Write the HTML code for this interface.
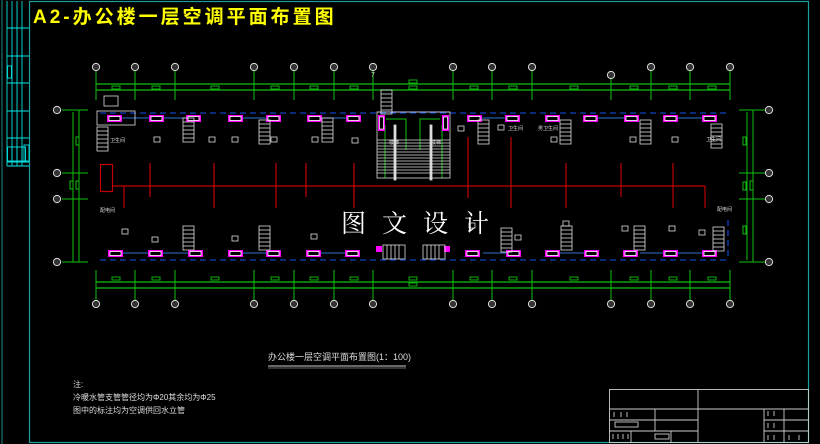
<!DOCTYPE html>
<html><head><meta charset="utf-8"><style>
html,body{margin:0;padding:0;background:#000;}
svg{display:block}
text{font-family:"Liberation Sans","Noto Sans CJK SC",sans-serif}
</style></head><body>
<svg width="820" height="444" viewBox="0 0 820 444" xmlns="http://www.w3.org/2000/svg">
<defs>
<g id="u"><rect x="0" y="0" width="15" height="7" fill="#ff00ff"/><rect x="2" y="1.5" width="11" height="4" fill="#000" stroke="#fff" stroke-width="0.8"/></g>
<g id="st" stroke="#ddd" stroke-width="0.8" fill="none"><rect x="0" y="0" width="11" height="24"/><line x1="0" y1="4" x2="11" y2="4"/><line x1="0" y1="8" x2="11" y2="8"/><line x1="0" y1="12" x2="11" y2="12"/><line x1="0" y1="16" x2="11" y2="16"/><line x1="0" y1="20" x2="11" y2="20"/></g>
<g id="ax"><circle r="3.6" fill="#333" stroke="#ddd" stroke-width="1"/></g>
</defs>
<rect width="820" height="444" fill="#000"/>
<line x1="2" y1="0" x2="2" y2="444" stroke="#1a8a8a" stroke-width="1"/>
<rect x="29.5" y="1.5" width="779" height="441" fill="none" stroke="#1aa0a0" stroke-width="1.2"/>
<g stroke="#00e5e5" stroke-width="0.9" fill="none">
<line x1="7" y1="1" x2="7" y2="166"/><line x1="12" y1="1" x2="12" y2="166"/><line x1="17" y1="1" x2="17" y2="166"/><line x1="22" y1="1" x2="22" y2="166"/>
<line x1="7" y1="28" x2="29" y2="28"/><line x1="7" y1="56" x2="29" y2="56"/><line x1="7" y1="83" x2="29" y2="83"/><line x1="7" y1="111" x2="29" y2="111"/><line x1="7" y1="138" x2="29" y2="138"/><line x1="7" y1="162" x2="29" y2="162"/><line x1="7" y1="166" x2="29" y2="166"/>
<rect x="7.5" y="66" width="4" height="12"/><rect x="7.5" y="147" width="18" height="14"/><line x1="12" y1="147" x2="12" y2="161"/><line x1="17" y1="147" x2="17" y2="161"/><line x1="22" y1="147" x2="22" y2="161"/><rect x="24" y="145" width="5" height="16"/>
</g>
<text x="33" y="23" font-size="19" font-weight="bold" fill="#ffff00" letter-spacing="3">A2-办公楼一层空调平面布置图</text>

<g stroke="#10c010" stroke-width="1.2" fill="none">
<line x1="96" y1="84" x2="730" y2="84"/><line x1="96" y1="90" x2="730" y2="90"/>
<line x1="96" y1="282" x2="730" y2="282"/><line x1="96" y1="288" x2="730" y2="288"/>
<g stroke-width="1">
<line x1="96" y1="71" x2="96" y2="100"/><line x1="135" y1="71" x2="135" y2="100"/><line x1="175" y1="71" x2="175" y2="100"/><line x1="254" y1="71" x2="254" y2="100"/><line x1="294" y1="71" x2="294" y2="100"/><line x1="334" y1="71" x2="334" y2="100"/><line x1="373" y1="71" x2="373" y2="100"/><line x1="453" y1="71" x2="453" y2="100"/><line x1="492" y1="71" x2="492" y2="100"/><line x1="532" y1="71" x2="532" y2="100"/><line x1="611" y1="75" x2="611" y2="100"/><line x1="651" y1="71" x2="651" y2="100"/><line x1="690" y1="71" x2="690" y2="100"/><line x1="730" y1="71" x2="730" y2="100"/>
<line x1="96" y1="270" x2="96" y2="300"/><line x1="135" y1="270" x2="135" y2="300"/><line x1="175" y1="270" x2="175" y2="300"/><line x1="254" y1="270" x2="254" y2="300"/><line x1="294" y1="270" x2="294" y2="300"/><line x1="334" y1="270" x2="334" y2="300"/><line x1="373" y1="270" x2="373" y2="300"/><line x1="453" y1="270" x2="453" y2="300"/><line x1="492" y1="270" x2="492" y2="300"/><line x1="532" y1="270" x2="532" y2="300"/><line x1="611" y1="270" x2="611" y2="300"/><line x1="651" y1="270" x2="651" y2="300"/><line x1="690" y1="270" x2="690" y2="300"/><line x1="730" y1="270" x2="730" y2="300"/>
<line x1="62" y1="110" x2="88" y2="110"/><line x1="62" y1="173" x2="88" y2="173"/><line x1="62" y1="199" x2="88" y2="199"/><line x1="62" y1="262" x2="88" y2="262"/>
<line x1="73" y1="112" x2="73" y2="262"/><line x1="79" y1="110" x2="79" y2="262"/>
<line x1="739" y1="110" x2="765" y2="110"/><line x1="739" y1="173" x2="765" y2="173"/><line x1="739" y1="199" x2="765" y2="199"/><line x1="739" y1="262" x2="765" y2="262"/>
<line x1="747" y1="112" x2="747" y2="260"/><line x1="753" y1="110" x2="753" y2="262"/>
<rect x="76" y="137" width="3" height="8"/><rect x="70" y="181" width="3" height="8"/><rect x="76" y="181" width="3" height="8"/>
<rect x="743" y="137" width="3" height="8"/><rect x="743" y="182" width="3" height="8"/><rect x="750" y="181" width="3" height="9"/><rect x="743" y="226" width="3" height="8"/>
</g>
<g stroke-width="0.9">
<rect x="112" y="86" width="8" height="3"/><rect x="152" y="86" width="8" height="3"/><rect x="211" y="86" width="8" height="3"/><rect x="271" y="86" width="8" height="3"/><rect x="310" y="86" width="8" height="3"/><rect x="350" y="86" width="8" height="3"/><rect x="409" y="80" width="8" height="3"/><rect x="409" y="86" width="8" height="3"/><rect x="470" y="86" width="8" height="3"/><rect x="509" y="86" width="8" height="3"/><rect x="570" y="86" width="8" height="3"/><rect x="630" y="86" width="8" height="3"/><rect x="669" y="86" width="8" height="3"/><rect x="708" y="86" width="8" height="3"/>
<rect x="112" y="277" width="8" height="3"/><rect x="152" y="277" width="8" height="3"/><rect x="211" y="277" width="8" height="3"/><rect x="271" y="277" width="8" height="3"/><rect x="310" y="277" width="8" height="3"/><rect x="350" y="277" width="8" height="3"/><rect x="409" y="277" width="8" height="3"/><rect x="409" y="283" width="8" height="3"/><rect x="470" y="277" width="8" height="3"/><rect x="509" y="277" width="8" height="3"/><rect x="570" y="277" width="8" height="3"/><rect x="630" y="277" width="8" height="3"/><rect x="669" y="277" width="8" height="3"/><rect x="708" y="277" width="8" height="3"/>
</g>
<path d="M386 119 H406 V150 M440 119 H420 V150 M385 125 V178 M442 125 V178" stroke-width="1"/>
</g>
<g>
<use href="#ax" x="96" y="67"/><use href="#ax" x="135" y="67"/><use href="#ax" x="175" y="67"/><use href="#ax" x="254" y="67"/><use href="#ax" x="294" y="67"/><use href="#ax" x="334" y="67"/><use href="#ax" x="373" y="67"/><use href="#ax" x="453" y="67"/><use href="#ax" x="492" y="67"/><use href="#ax" x="532" y="67"/><use href="#ax" x="611" y="75"/><use href="#ax" x="651" y="67"/><use href="#ax" x="690" y="67"/><use href="#ax" x="730" y="67"/>
<use href="#ax" x="96" y="304"/><use href="#ax" x="135" y="304"/><use href="#ax" x="175" y="304"/><use href="#ax" x="254" y="304"/><use href="#ax" x="294" y="304"/><use href="#ax" x="334" y="304"/><use href="#ax" x="373" y="304"/><use href="#ax" x="453" y="304"/><use href="#ax" x="492" y="304"/><use href="#ax" x="532" y="304"/><use href="#ax" x="611" y="304"/><use href="#ax" x="651" y="304"/><use href="#ax" x="690" y="304"/><use href="#ax" x="730" y="304"/>
<use href="#ax" x="57" y="110"/><use href="#ax" x="57" y="173"/><use href="#ax" x="57" y="199"/><use href="#ax" x="57" y="262"/>
<use href="#ax" x="769" y="110"/><use href="#ax" x="769" y="173"/><use href="#ax" x="769" y="199"/><use href="#ax" x="769" y="262"/>
</g>
<g stroke="#1040c0" stroke-width="1.3" stroke-dasharray="6,4" fill="none">
<line x1="100" y1="113" x2="728" y2="113"/><line x1="100" y1="260" x2="728" y2="260"/>
<line x1="728" y1="220" x2="728" y2="260"/>
</g>
<g stroke="#3070d0" stroke-width="1" fill="none">
<line x1="378" y1="112" x2="450" y2="112"/>
<line x1="122" y1="118" x2="150" y2="118"/><line x1="163" y1="118" x2="186" y2="118"/><line x1="243" y1="118" x2="266" y2="118"/><line x1="322" y1="118" x2="346" y2="118"/><line x1="482" y1="118" x2="505" y2="118"/><line x1="598" y1="118" x2="625" y2="118"/><line x1="677" y1="118" x2="703" y2="118"/>
<line x1="122" y1="253" x2="149" y2="253"/><line x1="163" y1="253" x2="188" y2="253"/><line x1="243" y1="253" x2="267" y2="253"/><line x1="321" y1="253" x2="346" y2="253"/><line x1="483" y1="253" x2="506" y2="253"/><line x1="560" y1="253" x2="584" y2="253"/><line x1="640" y1="253" x2="663" y2="253"/><line x1="677" y1="253" x2="702" y2="253"/>
</g>
<g stroke="#c00000" stroke-width="1.2" fill="none">
<rect x="100.5" y="164.5" width="12" height="27"/>
<line x1="112" y1="186" x2="705" y2="186"/><line x1="705" y1="186" x2="705" y2="208"/>
<line x1="150" y1="163" x2="150" y2="197"/><line x1="214" y1="163" x2="214" y2="208"/><line x1="276" y1="163" x2="276" y2="208"/><line x1="306" y1="163" x2="306" y2="197"/><line x1="354" y1="163" x2="354" y2="197"/><line x1="468" y1="137" x2="468" y2="198"/><line x1="511" y1="137" x2="511" y2="208"/><line x1="566" y1="163" x2="566" y2="208"/><line x1="621" y1="163" x2="621" y2="197"/><line x1="673" y1="163" x2="673" y2="208"/>
<line x1="124" y1="186" x2="124" y2="208"/><line x1="354" y1="186" x2="354" y2="208"/>
</g>
<g>
<use href="#u" x="107" y="115"/><use href="#u" x="149" y="115"/><use href="#u" x="186" y="115"/><use href="#u" x="228" y="115"/><use href="#u" x="266" y="115"/><use href="#u" x="307" y="115"/><use href="#u" x="346" y="115"/><use href="#u" x="467" y="115"/><use href="#u" x="505" y="115"/><use href="#u" x="545" y="115"/><use href="#u" x="583" y="115"/><use href="#u" x="624" y="115"/><use href="#u" x="663" y="115"/><use href="#u" x="702" y="115"/>
<use href="#u" x="108" y="250"/><use href="#u" x="148" y="250"/><use href="#u" x="188" y="250"/><use href="#u" x="228" y="250"/><use href="#u" x="266" y="250"/><use href="#u" x="306" y="250"/><use href="#u" x="345" y="250"/><use href="#u" x="465" y="250"/><use href="#u" x="506" y="250"/><use href="#u" x="545" y="250"/><use href="#u" x="584" y="250"/><use href="#u" x="623" y="250"/><use href="#u" x="663" y="250"/><use href="#u" x="702" y="250"/>
<rect x="378" y="115" width="7" height="16" fill="#ff00ff"/><rect x="379.5" y="117" width="4" height="12" fill="#000" stroke="#fff" stroke-width="0.7"/>
<rect x="442" y="115" width="7" height="16" fill="#ff00ff"/><rect x="443.5" y="117" width="4" height="12" fill="#000" stroke="#fff" stroke-width="0.7"/>
<rect x="376" y="246" width="6" height="6" fill="#ff00ff"/><rect x="444" y="246" width="6" height="6" fill="#ff00ff"/>
</g>
<g>
<use href="#st" x="183" y="118"/><use href="#st" x="259" y="120"/><use href="#st" x="322" y="118"/><use href="#st" x="478" y="120"/><use href="#st" x="560" y="120"/><use href="#st" x="640" y="120"/><use href="#st" x="711" y="124"/>
<use href="#st" x="183" y="226"/><use href="#st" x="259" y="226"/><use href="#st" x="501" y="228"/><use href="#st" x="561" y="226"/><use href="#st" x="634" y="226"/><use href="#st" x="713" y="227"/>
<use href="#st" x="381" y="90"/><use href="#st" x="97" y="127"/>
</g>
<g stroke="#ddd" stroke-width="0.8" fill="none">
<rect x="377" y="112" width="73" height="66"/>
<path d="M377 140H450M377 143H450M377 146H450M377 149H450M377 152H450M377 155H450M377 158H450M377 161H450M377 164H450M377 167H450M377 170H450M377 173H450"/>
<rect x="394" y="125" width="2" height="55" fill="#ddd"/><rect x="430" y="125" width="2" height="55" fill="#ddd"/>
<rect x="97" y="111" width="38" height="14"/>
<rect x="104" y="96" width="14" height="10"/>
<rect x="383" y="245" width="22" height="14"/><path d="M387 245V259M391 245V259M395 245V259M399 245V259"/>
<rect x="423" y="245" width="22" height="14"/><path d="M427 245V259M431 245V259M435 245V259M439 245V259"/>
<rect x="154" y="137" width="6" height="5"/><rect x="209" y="137" width="6" height="5"/><rect x="232" y="137" width="6" height="5"/><rect x="271" y="137" width="6" height="5"/><rect x="312" y="137" width="6" height="5"/><rect x="352" y="138" width="6" height="5"/><rect x="458" y="126" width="6" height="5"/><rect x="498" y="125" width="6" height="5"/><rect x="551" y="137" width="6" height="5"/><rect x="630" y="137" width="6" height="5"/><rect x="672" y="137" width="6" height="5"/>
<rect x="122" y="229" width="6" height="5"/><rect x="152" y="237" width="6" height="5"/><rect x="232" y="236" width="6" height="5"/><rect x="311" y="234" width="6" height="5"/><rect x="515" y="235" width="6" height="5"/><rect x="563" y="221" width="6" height="5"/><rect x="622" y="226" width="6" height="5"/><rect x="669" y="226" width="6" height="5"/><rect x="699" y="230" width="6" height="5"/><rect x="469" y="223" width="6" height="5"/>
</g>
<g fill="#ddd" font-size="5">
<text x="110" y="142">卫生间</text><text x="100" y="212">配电间</text><text x="508" y="130">卫生间</text><text x="538" y="130">男卫生间</text><text x="706" y="141">卫生间</text><text x="717" y="211">配电间</text><text x="389" y="144">楼梯</text><text x="431" y="144">楼梯</text>
<text x="371" y="77" font-size="7">7</text>
</g>
<text x="341" y="232" font-size="25" fill="#fff" letter-spacing="16" style="font-family:'Noto Serif CJK SC','Noto Sans CJK SC',serif">图文设计</text>
<text x="268" y="360" font-size="9" fill="#ddd">办公楼一层空调平面布置图(1：100)</text>
<line x1="268" y1="366" x2="406" y2="366" stroke="#ccc" stroke-width="1"/><line x1="268" y1="368" x2="406" y2="368" stroke="#ccc" stroke-width="0.6"/>
<g fill="#ddd" font-size="8">
<text x="73" y="387">注:</text>
<text x="73" y="400">冷暖水管支管管径均为Φ20其余均为Φ25</text>
<text x="73" y="413">图中的标注均为空调供回水立管</text>
</g>
<g stroke="#ccc" stroke-width="0.9" fill="none">
<rect x="609.5" y="389.5" width="199" height="53"/>
<line x1="609" y1="409" x2="809" y2="409"/><line x1="698" y1="389" x2="698" y2="443"/>
<line x1="609" y1="420" x2="698" y2="420"/><line x1="609" y1="431" x2="698" y2="431"/>
<line x1="655" y1="409" x2="655" y2="431"/><line x1="631" y1="431" x2="631" y2="443"/><line x1="671" y1="431" x2="671" y2="443"/>
<line x1="764" y1="409" x2="764" y2="443"/><line x1="784" y1="409" x2="784" y2="443"/>
<line x1="764" y1="420" x2="809" y2="420"/><line x1="764" y1="431" x2="809" y2="431"/>
<rect x="615" y="422" width="23" height="5"/><rect x="655" y="434" width="14" height="5"/>
<path d="M614 412v5M621 412v5M627 412v5M613 434v5M618 434v5M623 434v5M628 434v5M768 411v5M774 411v5M768 423v5M774 423v5M768 435v5M774 435v5M789 435v5M799 435v5"/>
</g>
</svg>
</body></html>
